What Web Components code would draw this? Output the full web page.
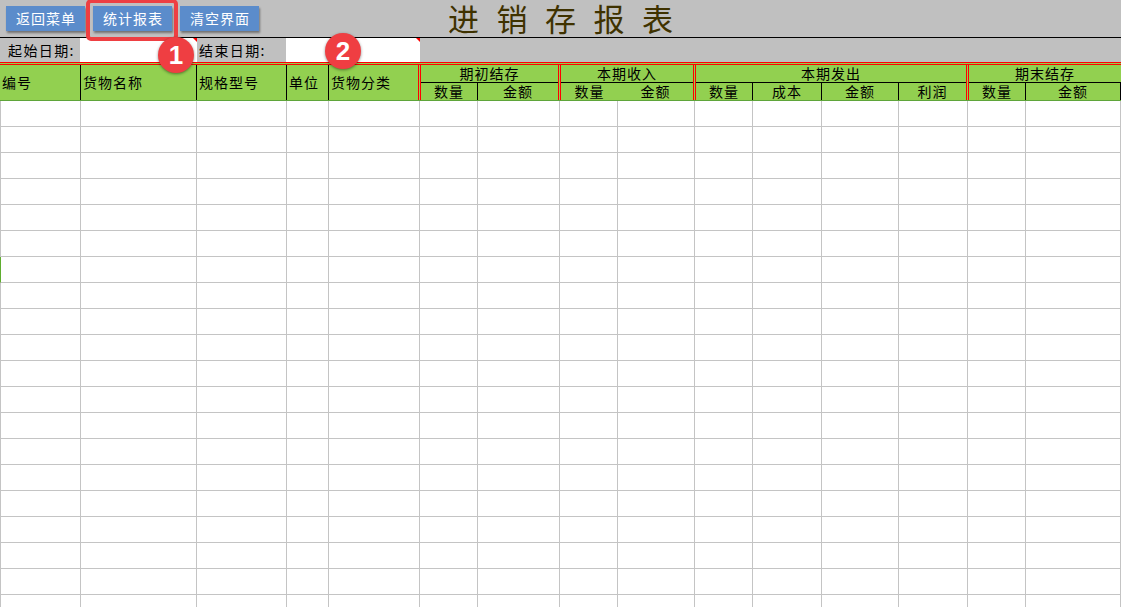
<!DOCTYPE html>
<html lang="zh">
<head>
<meta charset="utf-8">
<title>进销存报表</title>
<style>
    html, body {
        margin: 0;
        height: 100%;
        overflow: hidden;
        background: #ffffff;
        color: #000000;
        font-family: "Noto Sans CJK SC", "Liberation Sans", sans-serif;
        font-size: 14px;
        letter-spacing: 1px;
    }
</style>
</head>
<body>
<report-page>
    <report-toolbar heading="进销存报表">
        <report-button>返回菜单</report-button>
        <report-button>统计报表</report-button>
        <report-button>清空界面</report-button>
    </report-toolbar>
    <date-bar></date-bar>
    <sheet-header></sheet-header>
    <sheet-body></sheet-body>
    <call-frame slot="over"></call-frame>
    <call-badge slot="over" x="176" y="55">1</call-badge>
    <call-badge slot="over" x="343" y="51">2</call-badge>
</report-page>

<script>
// ancho de cada columna de la hoja, borde incluido
const COLUMNS = [81, 116, 90, 42, 91, 58, 82, 58, 77, 58, 69, 77, 69, 58, 95];

class ReportPage extends HTMLElement {
    constructor() {
        super();
        this.attachShadow({ mode: 'open' });
        this.shadowRoot.innerHTML = `
            <style>
                :host {
                    display: block;
                    position: relative;
                    width: 1121px;
                    height: 607px;
                    overflow: hidden;
                }
            </style>
            <slot></slot>
            <slot name="over"></slot>
        `;
    }
}

class ReportToolbar extends HTMLElement {
    constructor() {
        super();
        this.attachShadow({ mode: 'open' });
    }

    connectedCallback() {
        this.shadowRoot.innerHTML = `
            <style>
                :host {
                    display: flex;
                    align-items: flex-start;
                    gap: 8px;
                    box-sizing: border-box;
                    height: 38px;
                    padding: 6px 0 0 6px;
                    background: #c0c0c0;
                    border-bottom: 1px solid #000000;
                }

                h1 {
                    margin: -6px 0 0 181px;
                    font-size: 31px;
                    line-height: 36px;
                    font-weight: 400;
                    letter-spacing: 17.5px;
                    color: #3f3200;
                    white-space: nowrap;
                }
            </style>
            <slot></slot>
            <h1>${this.getAttribute('heading')}</h1>
        `;
    }
}

class ReportButton extends HTMLElement {
    constructor() {
        super();
        this.attachShadow({ mode: 'open' });
        this.shadowRoot.innerHTML = `
            <style>
                :host {
                    display: flex;
                    align-items: center;
                    justify-content: center;
                    box-sizing: border-box;
                    width: 79px;
                    height: 25px;
                    padding: 0 0 2px 1px;
                    background: #5b8ccb;
                    color: #ffffff;
                    box-shadow: 1px 2px 2px rgba(0, 0, 0, 0.4);
                }
            </style>
            <slot></slot>
        `;
    }
}

class DateBar extends HTMLElement {
    constructor() {
        super();
        this.attachShadow({ mode: 'open' });
        this.shadowRoot.innerHTML = `
            <style>
                :host {
                    display: grid;
                    grid-template-columns: 80px 117px 89px 134px 1fr;
                    height: 24px;
                    background: #c0c0c0;
                    line-height: 24px;
                }

                .label {
                    letter-spacing: 1.4px;
                    white-space: nowrap;
                }

                .start {
                    padding-left: 8px;
                }

                .end {
                    padding-left: 2px;
                }

                .input {
                    position: relative;
                    background: #ffffff;
                }

                /* marca roja de comentario */
                .input::after {
                    content: "";
                    position: absolute;
                    top: 0;
                    right: 0;
                    border-top: 4px solid #ff0000;
                    border-left: 4px solid transparent;
                }
            </style>
            <div class="label start">起始日期:</div>
            <div class="input"></div>
            <div class="label end">结束日期:</div>
            <div class="input"></div>
        `;
    }
}

class SheetHeader extends HTMLElement {
    constructor() {
        super();
        this.attachShadow({ mode: 'open' });
        const fixed = [['编号', 81], ['货物名称', 116], ['规格型号', 90], ['单位', 42]];
        const groups = [
            { title: '期初结存', width: 140, cells: [['数量', 57], ['金额', 80, 'none']] },
            { title: '本期收入', width: 135, cells: [['数量', 57, 'none'], ['金额', 75, 'none']] },
            { title: '本期发出', width: 273, cells: [['数量', 57], ['成本', 69], ['金额', 77], ['利润', 67, 'none']] },
            { title: '期末结存', width: 155, cells: [['数量', 57], ['金额', 95]] }
        ];

        const fixedHtml = fixed.map(([text, width]) =>
            `<div class="fixed" style="width:${width}px">${text}</div>`).join('');

        const groupsHtml = groups.map(group => `
            <div class="group" style="width:${group.width}px">
                <div class="title">${group.title}</div>
                <div class="subs">
                    ${group.cells.map(([text, width, line]) =>
                        `<div class="sub ${line || ''}" style="width:${width}px">${text}</div>`).join('')}
                </div>
            </div>
        `).join('');

        this.shadowRoot.innerHTML = `
            <style>
                :host {
                    display: flex;
                    box-sizing: border-box;
                    height: 39px;
                    background: #92d050;
                    border-top: 3px double #ff0000;
                    border-bottom: 1px solid #5fa53a;
                }

                .fixed {
                    box-sizing: border-box;
                    padding-left: 2px;
                    line-height: 35px;
                    border-right: 1px solid #000000;
                    white-space: nowrap;
                }

                .fixed.last {
                    border-right: none;
                }

                .group {
                    box-sizing: border-box;
                    display: flex;
                    flex-direction: column;
                    border-left: 3px double #ff0000;
                }

                .title {
                    height: 17px;
                    line-height: 17px;
                    text-align: center;
                    border-bottom: 1px solid #000000;
                }

                .subs {
                    display: flex;
                    flex: 1;
                }

                .sub {
                    box-sizing: border-box;
                    line-height: 17px;
                    text-align: center;
                    border-right: 1px solid #000000;
                }

                .sub.none {
                    border-right: none;
                }
            </style>
            ${fixedHtml}
            <div class="fixed last" style="width:89px">货物分类</div>
            ${groupsHtml}
        `;
    }
}

class SheetBody extends HTMLElement {
    constructor() {
        super();
        this.attachShadow({ mode: 'open' });
        let cells = '';
        for (let row = 0; row < 20; row++) {
            COLUMNS.forEach((_, col) => {
                const first = col === 0 ? (row === 6 ? 'first active' : 'first') : '';
                cells += `<div class="cell ${first}"></div>`;
            });
        }
        this.shadowRoot.innerHTML = `
            <style>
                :host {
                    display: grid;
                    grid-template-columns: ${COLUMNS.map(w => w + 'px').join(' ')};
                    grid-auto-rows: 26px;
                    background: #ffffff;
                }

                .cell {
                    box-sizing: border-box;
                    border-right: 1px solid #c4c4c4;
                    border-bottom: 1px solid #c4c4c4;
                }

                .first {
                    border-left: 1px solid #c4c4c4;
                }

                .active {
                    border-left-color: #5fad2f;
                }
            </style>
            ${cells}
        `;
    }
}

class CallFrame extends HTMLElement {
    constructor() {
        super();
        this.attachShadow({ mode: 'open' });
        this.shadowRoot.innerHTML = `
            <style>
                :host {
                    position: absolute;
                    left: 86px;
                    top: -1px;
                    width: 92px;
                    height: 42px;
                    box-sizing: border-box;
                    border: 4px solid #ee3f42;
                    border-radius: 5px;
                }
            </style>
        `;
    }
}

class CallBadge extends HTMLElement {
    constructor() {
        super();
        this.attachShadow({ mode: 'open' });
    }

    connectedCallback() {
        const x = Number(this.getAttribute('x'));
        const y = Number(this.getAttribute('y'));
        this.shadowRoot.innerHTML = `
            <style>
                :host {
                    position: absolute;
                    left: ${x - 18}px;
                    top: ${y - 18}px;
                    width: 36px;
                    height: 36px;
                    display: flex;
                    align-items: center;
                    justify-content: center;
                    border-radius: 50%;
                    background: #ef3e42;
                    box-shadow: 0 1px 3px rgba(0, 0, 0, 0.45);
                    color: #ffffff;
                    font-family: "Liberation Sans", sans-serif;
                    font-size: 26px;
                    font-weight: 700;
                    letter-spacing: 0;
                }
            </style>
            <slot></slot>
        `;
    }
}

customElements.define('report-page', ReportPage);
customElements.define('report-toolbar', ReportToolbar);
customElements.define('report-button', ReportButton);
customElements.define('date-bar', DateBar);
customElements.define('sheet-header', SheetHeader);
customElements.define('sheet-body', SheetBody);
customElements.define('call-frame', CallFrame);
customElements.define('call-badge', CallBadge);
</script>
</body>
</html>
